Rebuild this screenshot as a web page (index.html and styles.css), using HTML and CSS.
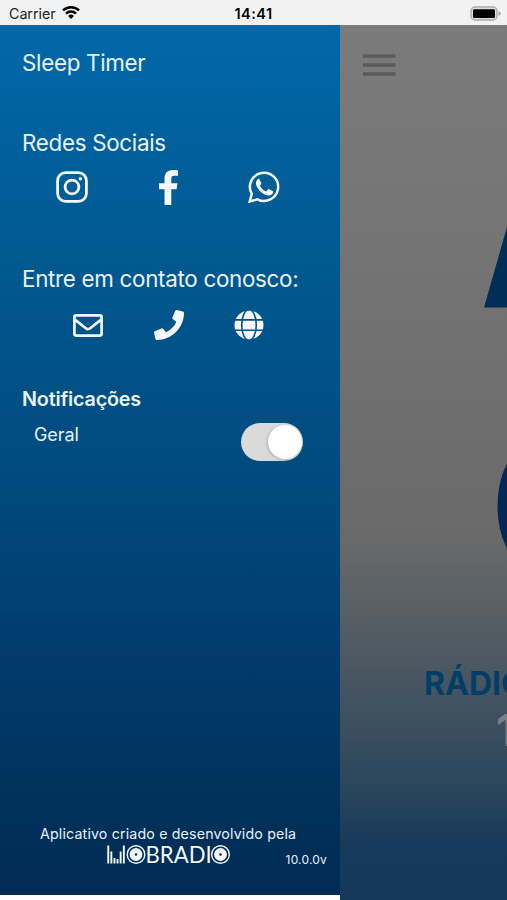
FILE: index.html
```html
<!DOCTYPE html>
<html lang="pt-BR">
<head>
<meta charset="utf-8">
<meta name="viewport" content="width=device-width, initial-scale=1">
<title>Mobradio</title>
<link rel="stylesheet" href="styles.css">
</head>
<body>
<header class="status">
  <div class="status-left">
    <span class="carrier">Carrier</span>
    <svg class="wifi" viewBox="0 0 18 14" fill="none" stroke="#000" stroke-width="2.5"><path d="M1 5.4a11.5 11.5 0 0 1 16 0M4 8.6a7.2 7.2 0 0 1 10 0"/><path d="M6.1 11a4.1 4.1 0 0 1 5.8 0L9 13.9z" fill="#000" stroke="none"/></svg>
  </div>
  <span class="clock">14:41</span>
  <svg class="battery" viewBox="0 0 32 16"><rect x="1" y="1" width="26" height="13" rx="4" fill="#ddd" stroke="#aaa" stroke-width="1.4"/><rect x="3" y="3.3" width="22" height="8.7" rx="1.2"/><path d="M28.5 5v5q2.3-.7 2.3-2.5T28.500 5z" fill="#aaa"/></svg>
</header>
<main class="screen">
  <nav class="drawer">
    <div class="panel">
      <h2 class="heading sleep">Sleep Timer</h2>
      <h2 class="heading social-title">Redes Sociais</h2>
      <div class="icons social">
        <svg width="32" height="32" viewBox="0 0 32 32" fill="none" stroke="#f4f8fc" stroke-width="2.8"><rect x="1.6" y="1.6" width="28.800" height="28.800" rx="8"/><circle cx="16" cy="16" r="6.900"/><circle cx="24.400" cy="7.800" r="1.800" fill="#f4f8fc" stroke="none"/></svg>
        <svg width="19" height="35" viewBox="0 0 264 512" preserveAspectRatio="none" fill="#f4f8fc"><path d="M76.700 512V283H0v-91h76.700v-71.700C76.700 42.400 124.300 0 193.800 0c33.300 0 61.900 2.500 70.200 3.600V85h-48.200c-37.800 0-45.100 18-45.100 44.300V192H256l-11.700 91h-73.600v229"/></svg>
        <svg width="32" height="32" viewBox="0 0 32 32"><path d="M1.700 30.500l2.100-7.700A14.100 14.100 0 1 1 9.500 28.300z" fill="none" stroke="#f4f8fc" stroke-width="2.500"/><path d="M9.700 8.200c.5-.5 1.500-.5 1.900.2l1.700 3.700c.3.600-.1 1.200-1.300 2.600 1.500 2.800 3.300 4.500 6.200 5.700l1.700-2c.4-.4.800-.4 1.300-.2l3.500 1.700c.7.400.5 1.500.1 2.400-.8 1.600-3 2.500-4.800 2.200C14.300 23.800 8.600 17.700 8 13.100c-.3-2 .4-3.700 1.700-4.900z" fill="#f4f8fc"/></svg>
      </div>
      <h2 class="heading contact-title">Entre em contato conosco:</h2>
      <div class="icons contact">
        <svg width="30" height="23" viewBox="0 0 30 23" fill="none" stroke="#f4f8fc" stroke-width="2.700"><rect x="1.400" y="1.400" width="27.200" height="20.200" rx="1.800"/><path d="M1.600 5.400l11.200 8.900q2.200 1.700 4.400 0L28.400 5.400"/></svg>
        <svg width="30" height="30" viewBox="0 0 512 512" fill="#f4f8fc"><path d="M493.400 24.600l-104-24c-11.300-2.600-22.900 3.300-27.500 13.900l-48 112c-4.200 9.800-1.400 21.300 6.900 28l60.600 49.600c-36 76.700-98.900 140.500-177.200 177.200l-49.600-60.600c-6.800-8.300-18.200-11.100-28-6.900l-112 48C3.900 366.500-2 378.100.6 389.400l24 104C27.100 504.200 36.700 512 48 512c256.100 0 464-207.500 464-464 0-11.200-7.700-20.900-18.600-23.400z"/></svg>
        <svg width="30" height="30" viewBox="0 0 30 30"><circle cx="15" cy="15" r="14.500" fill="#f4f8fc"/><g fill="none" stroke="#01538a" stroke-width="1.600"><ellipse cx="15" cy="15" rx="7.300" ry="15.500"/><path d="M0 9.900h30M0 20.200h30"/></g></svg>
      </div>
      <h3 class="notifications">Notificações</h3>
      <div class="setting"><span class="setting-name">Geral</span><span class="switch"><span class="knob"></span></span></div>
      <footer class="credits">
        <p class="made">Aplicativo criado e desenvolvido pela</p>
        <div class="brand">
          <svg class="logo" viewBox="0 0 124 20" fill="#f4f8fc">
            <path d="M.3.500h1.900v18H.3zM3.400 6.500h1.900v12H3.400zM6.500 13h1.900v5.500H6.500zM9.600 14h1.900v4.500H9.600zM12.700 6.500h1.900v12h-1.900zM15.900.500h1.900v18h-1.900z"/>
            <g id="disc"><circle cx="29" cy="9.500" r="8.800" fill="none" stroke="#f4f8fc" stroke-width="1.400"/><circle cx="29" cy="9.500" r="6.400"/><circle cx="29" cy="9.500" r="1.300" fill="#01305a"/></g>
            <text class="letters" x="38.600" y="18.300" textLength="66" lengthAdjust="spacingAndGlyphs">BRADI</text>
            <use href="#disc" x="84.500"/>
          </svg>
          <span class="version">10.0.0v</span>
        </div>
      </footer>
    </div>
  </nav>
  <section class="player">
    <svg class="menu" viewBox="0 0 33 22"><path d="M0 2h32.500M0 11h32.500M0 20h32.500" stroke="#5b5b5b" stroke-width="3.300"/></svg>
    <svg class="art" viewBox="0 0 27 360"><path d="M4 107.500L27 27v80.500z" fill="#002e56"/><ellipse cx="47.500" cy="306" rx="30" ry="58" fill="#052757"/></svg>
    <p class="station">RÁDIO</p>
    <p class="frequency">1</p>
  </section>
</main>
</body>
</html>
```
FILE: styles.css
```css
* { box-sizing: border-box; }
body, h2, h3, p { margin: 0; }
body {
  width: 507px;
  height: 900px;
  overflow: hidden;
  font-family: Inter, "Liberation Sans", sans-serif;
  color: #e8f3fc;
  background: #fff;
}
svg { display: block; flex: none; }
.status {
  display: grid;
  grid-template-columns: 1fr auto 1fr;
  align-items: center;
  height: 25px;
  padding: 2px 5px 0 9px;
  background: #f2f2f2;
  color: #000;
}
.status-left { display: flex; align-items: center; gap: 6px; }
.carrier { font-size: 14.3px; color: #222; letter-spacing: -.05px; }
.wifi { width: 18px; height: 14px; margin-top: -3px; }
.clock { font-size: 14.5px; font-weight: 600; letter-spacing: .5px; margin-right: 4px; }
.battery { width: 32px; height: 16px; justify-self: end; }
.screen { display: flex; height: 875px; }
.drawer { width: 340px; flex: none; }
.panel {
  display: flex;
  flex-direction: column;
  height: 870px;
  background: linear-gradient(#0268a9 0%, #01588f 29%, #014b80 50%, #013a6a 75%, #012b52 100%);
}
.heading {
  padding-left: 22px;
  font-size: 22.4px;
  font-weight: 400;
  line-height: 30px;
  letter-spacing: -.31px;
  white-space: nowrap;
}
.sleep { margin-top: 23px; }
.social-title { margin-top: 50px; }
.icons { display: flex; align-items: center; }
.social { height: 36px; margin-top: 11px; padding: 0 60px 0 56px; justify-content: space-between; }
.contact-title { margin-top: 59px; }
.contact { height: 34px; margin-top: 14px; padding: 0 76px 0 73px; justify-content: space-between; }
.notifications { margin: 44px 0 0 22px; font-size: 19.8px; line-height: 26px; font-weight: 600; letter-spacing: -.2px; }
.setting { display: flex; justify-content: space-between; padding: 11px 37px 0 34px; }
.setting-name { font-size: 18px; line-height: 24px; letter-spacing: -.1px; }
.switch {
  display: flex;
  justify-content: flex-end;
  width: 62px;
  height: 38px;
  padding: 2px 1px;
  border-radius: 19px;
  background: #dadada;
}
.knob { width: 34px; height: 34px; border-radius: 50%; background: #fff; box-shadow: -1px 1px 3px #0003; }
.credits { margin-top: auto; padding-bottom: 27px; }
.made { padding-left: 40px; font-size: 14.200px; line-height: 18px; letter-spacing: .17px; white-space: nowrap; }
.brand { display: flex; justify-content: space-between; padding: 2px 13px 0 107px; }
.logo { width: 124px; height: 20px; }
.letters { font: 24px Lato, sans-serif; }
.version { margin-top: 7px; font-size: 12px; line-height: 16px; letter-spacing: .2px; }
.player {
  flex: 1;
  display: flex;
  flex-direction: column;
  min-width: 0;
  overflow: hidden;
  background: linear-gradient(#7b7b7b 0, #747474 230px, #6a6a6a 510px, #4e5962 630px, #2d475c 755px, #163a5a 820px, #14395a 100%);
}
.menu { width: 33px; height: 22px; margin: 29px 0 0 23px; }
.art { width: 27px; height: 360px; margin-top: 124px; align-self: flex-end; }
.station { margin: 104px 0 0 84px; font-size: 32px; line-height: 40px; font-weight: 700; color: #013f69; }
.frequency { margin: 1px 0 0 156px; font-size: 44px; line-height: 50px; font-weight: 700; color: #7c8081; }
```
